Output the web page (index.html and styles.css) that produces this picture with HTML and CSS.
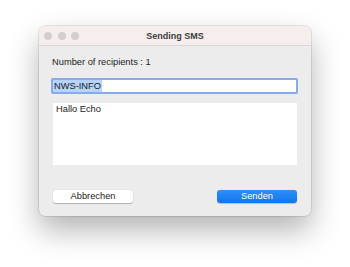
FILE: index.html
```html
<!DOCTYPE html>
<html>
<head>
<meta charset="utf-8">
<link rel="stylesheet" href="styles.css">
</head>
<body>
<div class="window">
  <div class="titlebar">
    <div class="lights"><span class="light"></span><span class="light"></span><span class="light"></span></div>
    <div class="title">Sending SMS</div>
    <div></div>
  </div>
  <div class="content">
    <div class="label">Number of recipients : 1</div>
    <div class="field"><span class="sel">NWS-INFO</span></div>
    <div class="area">Hallo Echo</div>
    <div class="buttons">
      <div class="btn">Abbrechen</div>
      <div class="btn primary">Senden</div>
    </div>
  </div>
</div>
</body>
</html>
```
FILE: styles.css
```css
html, body { margin: 0; padding: 0; background: #ffffff; }
body {
  width: 350px; height: 267px; overflow: hidden;
  padding: 26px 0 0 39px; box-sizing: border-box;
  font-family: "Liberation Sans", Arial, sans-serif;
  font-size: 9.3px; color: #1f1f1f;
}
.window {
  width: 272px; height: 190px; box-sizing: border-box;
  background: #ececec; border-radius: 6px; overflow: hidden;
  box-shadow: 0 14px 30px rgba(0,0,0,0.3), 0 0 0 0.5px rgba(0,0,0,0.18);
  display: flex; flex-direction: column;
}
.titlebar {
  height: 19px; flex: none;
  background: #f6eeed; border-bottom: 1px solid #dcd5d4;
  display: grid; grid-template-columns: 1fr auto 1fr; align-items: center;
}
.lights { display: flex; gap: 5.5px; padding-left: 5px; }
.light { width: 8px; height: 8px; border-radius: 50%; background: #d3cfcf; }
.title { font-weight: bold; font-size: 9px; color: #403c3c; }
.content { padding: 10px 13px 0 13px; display: flex; flex-direction: column; }
.label { height: 12px; line-height: 12px; color: #222222; }
.field {
  margin: 10px 0 0 -1px; height: 16px; box-sizing: border-box;
  border: 2px solid #86aaea; border-radius: 2px; background: #ffffff;
  line-height: 12px; padding-left: 0;
}
.sel { background: #b5d3fb; color: #1a1a1a; padding: 0 1px; display: inline-block; height: 12px; }
.area {
  margin: 9px 1px 0 1px; height: 62px; box-sizing: border-box;
  background: #ffffff; padding: 1px 3px; line-height: 11px; color: #1a1a1a;
}
.buttons { margin-top: 25px; display: flex; justify-content: space-between; padding: 0 1px; }
.btn {
  width: 80px; height: 13px; line-height: 13px; text-align: center;
  background: #ffffff; border-radius: 3px; color: #222222;
  box-shadow: 0 0.5px 1px rgba(0,0,0,0.25);
}
.btn.primary {
  background: linear-gradient(#2d8ff8, #1275ef); color: #ffffff;
  box-shadow: 0 0.5px 1px rgba(0,0,0,0.2);
}
```
